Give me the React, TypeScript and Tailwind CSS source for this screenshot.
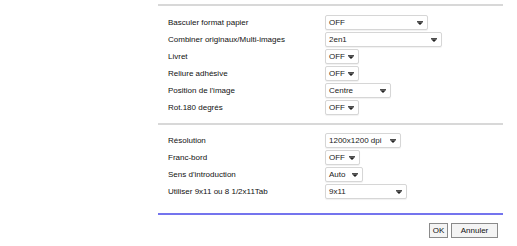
import React from "react";

function Sel({ value, w }: { value: string; w: string }) {
  return (
    <div
      className={`h-[15px] ${w} shrink-0 border border-[#d6d6d6] rounded-[2px] bg-white shadow-[0_1px_1px_rgba(0,0,0,0.06)] flex items-center justify-between pl-[3px] pr-[4px] text-[8px] text-[#222] whitespace-nowrap`}
    >
      <span className="leading-none">{value}</span>
      <svg width="6" height="4" viewBox="0 0 6 4" className="shrink-0">
        <rect x="0" y="0" width="6" height="0.8" fill="#222" />
        <path d="M0 1.3 L6 1.3 L3 4 Z" fill="#222" />
      </svg>
    </div>
  );
}

function Row({ label, value, w }: { label: string; value: string; w: string }) {
  return (
    <div className="flex items-center h-[15px]">
      <div className="w-[167px] shrink-0 pl-[10px] text-[8px] text-[#111] leading-none whitespace-nowrap">{label}</div>
      <Sel value={value} w={w} />
    </div>
  );
}

export default function App() {
  return (
    <div
      className="w-[517px] h-[246px] bg-white relative"
      style={{ fontFamily: '"Liberation Sans", Arial, sans-serif' }}
    >
      <div className="ml-[158px] w-[345px] pt-[4px]">
        <div className="h-[2px] bg-[#d8d8d8]" />
        <div className="flex flex-col gap-[2px] pt-[9px] pb-[8px]">
          <Row label="Basculer format papier" value="OFF" w="w-[103px]" />
          <Row label="Combiner originaux/Multi-images" value="2en1" w="w-[117px]" />
          <Row label="Livret" value="OFF" w="w-[34px]" />
          <Row label="Reliure adhésive" value="OFF" w="w-[34px]" />
          <Row label="Position de l'image" value="Centre" w="w-[66px]" />
          <Row label="Rot.180 degrés" value="OFF" w="w-[34px]" />
        </div>
        <div className="h-[2px] bg-[#d8d8d8]" />
        <div className="flex flex-col gap-[2px] pt-[8px] pb-[14px]">
          <Row label="Résolution" value="1200x1200 dpi" w="w-[76px]" />
          <Row label="Franc-bord" value="OFF" w="w-[35px]" />
          <Row label="Sens d'introduction" value="Auto" w="w-[38px]" />
          <Row label="Utiliser 9x11 ou 8 1/2x11Tab" value="9x11" w="w-[82px]" />
        </div>
        <div className="h-[2px] bg-[#7474ee]" />
        <div className="flex justify-end gap-[3px] pt-[8px] pr-[5px]">
          <button className="h-[15px] w-[19px] border border-[#8a8a8a] bg-[#f4f4f4] text-[8px] text-[#111] leading-none flex items-center justify-center">
            OK
          </button>
          <button className="h-[15px] w-[47px] border border-[#8a8a8a] bg-[#f4f4f4] text-[8px] text-[#111] leading-none flex items-center justify-center">
            Annuler
          </button>
        </div>
      </div>
    </div>
  );
}
